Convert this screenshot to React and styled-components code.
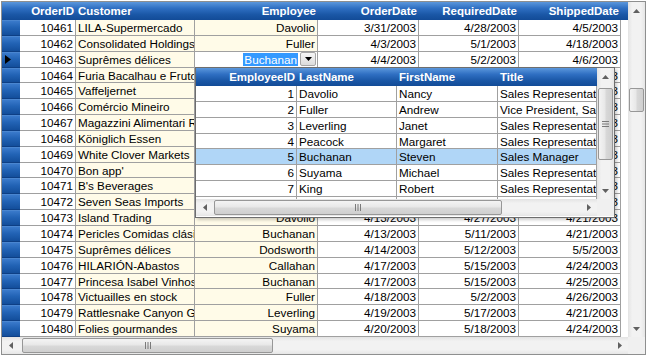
import React from "react";
import styled, { createGlobalStyle } from "styled-components";

const GlobalStyle = createGlobalStyle`
  html, body {
    margin: 0;
    padding: 0;
    background: #ffffff;
  }
  body {
    font-family: "Liberation Sans", Arial, sans-serif;
    font-size: 11.7px;
    color: #000000;
  }
  * {
    box-sizing: border-box;
  }
`;

const ROW_H = "15.85px";
const LINE = "#a0a0a0";
const HEADER_BG = "linear-gradient(to bottom, #5b97dc 0%, #2f6fc2 35%, #1a57a6 70%, #124b97 100%)";
const GRID_COLS = "18px 56px 119px 123px 101px 100px 102px 1fr";
const POPUP_COLS = "101px 100px 101px 99px";

const Frame = styled.div`
    margin: 1px 0 0 1px;
    width: 645px;
    height: 354px;
    border: 1px solid #8e8f8f;
    display: grid;
    grid-template-columns: 626px 17px;
    grid-template-rows: 335px 17px;
    background: #ffffff;
`;

const GridArea = styled.div`
    position: relative;
    overflow: hidden;
    background: #ffffff;
`;

const HeaderRow = styled.div`
    display: grid;
    grid-template-columns: ${(p) => p.$cols};
    height: 18px;
    background: ${HEADER_BG};
`;

const HeaderCell = styled.div`
    color: #ffffff;
    font-weight: bold;
    font-size: 11.5px;
    line-height: 18px;
    padding: 0 2px;
    text-align: ${(p) => p.$align || "left"};
    white-space: nowrap;
    overflow: hidden;
`;

const DataRow = styled.div`
    display: grid;
    grid-template-columns: ${(p) => p.$cols};
    height: ${ROW_H};
    background: ${(p) => p.$selected ? "#b0d6f7" : "transparent"};
`;

const RowHead = styled.div`
    background: linear-gradient(to bottom, #3a7acb 0%, #2263b5 45%, #134e9b 100%);
    border-top: 1px solid #4a86d0;
    border-bottom: 1px solid #0d3f85;
    display: flex;
    align-items: center;
    padding-left: 3px;
`;

const Cell = styled.div`
    border-right: 1px solid ${LINE};
    border-bottom: 1px solid ${LINE};
    background: ${(p) => p.$bg || "transparent"};
    text-align: ${(p) => p.$align || "left"};
    padding: 0 2px;
    line-height: 15px;
    white-space: nowrap;
    overflow: hidden;
`;

const Filler = styled.div`
    background: #ffffff;
`;

const EditCell = styled.div`
    border-right: 1px solid ${LINE};
    border-bottom: 1px solid ${LINE};
    background: #ffffff;
    display: flex;
    align-items: center;
    justify-content: flex-end;
    padding-right: 1px;
`;

const Selected = styled.span`
    background: #3399ff;
    color: #ffffff;
    line-height: 13px;
    padding: 0 1px;
`;

const DropButton = styled.div`
    width: 16px;
    height: 14px;
    margin-left: 2px;
    border: 1px solid #a7a7a7;
    border-radius: 2px;
    background: linear-gradient(to bottom, #f6f6f6, #dcdcdc);
    display: flex;
    align-items: center;
    justify-content: center;
`;

const Popup = styled.div`
    position: absolute;
    left: 193px;
    top: 65px;
    width: 420px;
    height: 151px;
    border: 1px solid #6e6e6e;
    box-shadow: 2px 2px 3px rgba(0, 0, 0, 0.2);
    background: #ffffff;
    display: grid;
    grid-template-columns: 401px 17px;
    grid-template-rows: 131px 17px;
`;

const PopupBody = styled.div`
    overflow: hidden;
`;

const VScroll = styled.div`
    display: flex;
    flex-direction: column;
    background: linear-gradient(to right, #e3e3e3 0%, #f2f2f2 25%, #f2f2f2 75%, #e6e6e6 100%);
`;

const HScroll = styled.div`
    display: flex;
    background: linear-gradient(to bottom, #e3e3e3 0%, #f2f2f2 25%, #f2f2f2 75%, #e6e6e6 100%);
`;

const ArrowBox = styled.div`
    width: 17px;
    height: 17px;
    flex: none;
    display: flex;
    align-items: center;
    justify-content: center;
`;

const Track = styled.div`
    flex: 1;
    display: flex;
    flex-direction: ${(p) => (p.$vertical ? "column" : "row")};
    min-width: 0;
    min-height: 0;
`;

const Thumb = styled.div`
    flex: none;
    border: 1px solid #979797;
    border-radius: 2px;
    display: flex;
    align-items: center;
    justify-content: center;
    ${(p) =>
        p.$vertical
            ? `margin: ${p.$offset}px 1px 0 1px;
               height: ${p.$size}px;
               background: linear-gradient(to right, #f4f4f4, #e8e8e8 45%, #d8d8d8 55%, #cfcfcf);`
            : `margin: 1px 0 1px ${p.$offset}px;
               width: ${p.$size}px;
               background: linear-gradient(to bottom, #f4f4f4, #e8e8e8 45%, #d8d8d8 55%, #cfcfcf);`}
`;

const Corner = styled.div`
    background: #f0f0f0;
`;

function Arrow({ dir, color = "#606060" }) {
    const pts = {
        up: "0,4 3.5,0 7,4",
        down: "0,0 7,0 3.5,4",
        left: "4,0 4,7 0,3.5",
        right: "0,0 0,7 4,3.5",
    }[dir];
    const vertical = dir === "up" || dir === "down";
    return (
        <svg width={vertical ? 7 : 4} height={vertical ? 4 : 7} viewBox={vertical ? "0 0 7 4" : "0 0 4 7"}>
            <polygon points={pts} fill={color} />
        </svg>
    );
}

function Grip({ vertical }) {
    return vertical ? (
        <svg width="7" height="6" viewBox="0 0 7 6">
            <rect x="0" y="0" width="7" height="1" fill="#7a7a7a" />
            <rect x="0" y="2.5" width="7" height="1" fill="#7a7a7a" />
            <rect x="0" y="5" width="7" height="1" fill="#7a7a7a" />
        </svg>
    ) : (
        <svg width="6" height="7" viewBox="0 0 6 7">
            <rect x="0" y="0" width="1" height="7" fill="#7a7a7a" />
            <rect x="2.5" y="0" width="1" height="7" fill="#7a7a7a" />
            <rect x="5" y="0" width="1" height="7" fill="#7a7a7a" />
        </svg>
    );
}

function VerticalBar({ offset, size, grip }) {
    return (
        <VScroll>
            <ArrowBox><Arrow dir="up" /></ArrowBox>
            <Track $vertical>
                <Thumb $vertical $offset={offset} $size={size}>{grip && <Grip vertical />}</Thumb>
            </Track>
            <ArrowBox><Arrow dir="down" /></ArrowBox>
        </VScroll>
    );
}

function HorizontalBar({ offset, size }) {
    return (
        <HScroll>
            <ArrowBox><Arrow dir="left" /></ArrowBox>
            <Track>
                <Thumb $offset={offset} $size={size}><Grip /></Thumb>
            </Track>
            <ArrowBox><Arrow dir="right" /></ArrowBox>
        </HScroll>
    );
}

const orders = [
    [10461, "LILA-Supermercado", "Davolio", "3/31/2003", "4/28/2003", "4/5/2003"],
    [10462, "Consolidated Holdings", "Fuller", "4/3/2003", "5/1/2003", "4/18/2003"],
    [10463, "Suprêmes délices", "Buchanan", "4/4/2003", "5/2/2003", "4/6/2003"],
    [10464, "Furia Bacalhau e Frutos do Mar", "Peacock", "4/4/2003", "5/2/2003", "4/14/2003"],
    [10465, "Vaffeljernet", "Peacock", "4/5/2003", "5/3/2003", "4/14/2003"],
    [10466, "Comércio Mineiro", "Peacock", "4/6/2003", "5/4/2003", "4/13/2003"],
    [10467, "Magazzini Alimentari Riuniti", "Peacock", "4/6/2003", "5/4/2003", "4/11/2003"],
    [10468, "Königlich Essen", "Leverling", "4/7/2003", "5/5/2003", "4/12/2003"],
    [10469, "White Clover Markets", "Davolio", "4/10/2003", "5/8/2003", "4/14/2003"],
    [10470, "Bon app'", "Peacock", "4/11/2003", "5/9/2003", "4/14/2003"],
    [10471, "B's Beverages", "Fuller", "4/11/2003", "5/9/2003", "4/18/2003"],
    [10472, "Seven Seas Imports", "King", "4/12/2003", "5/10/2003", "4/19/2003"],
    [10473, "Island Trading", "Davolio", "4/13/2003", "4/27/2003", "4/21/2003"],
    [10474, "Pericles Comidas clásicas", "Buchanan", "4/13/2003", "5/11/2003", "4/21/2003"],
    [10475, "Suprêmes délices", "Dodsworth", "4/14/2003", "5/12/2003", "5/5/2003"],
    [10476, "HILARIÓN-Abastos", "Callahan", "4/17/2003", "5/15/2003", "4/24/2003"],
    [10477, "Princesa Isabel Vinhos", "Buchanan", "4/17/2003", "5/15/2003", "4/25/2003"],
    [10478, "Victuailles en stock", "Fuller", "4/18/2003", "5/2/2003", "4/26/2003"],
    [10479, "Rattlesnake Canyon Grocery", "Leverling", "4/19/2003", "5/17/2003", "4/21/2003"],
    [10480, "Folies gourmandes", "Suyama", "4/20/2003", "5/18/2003", "4/24/2003"],
];

const employees = [
    [1, "Davolio", "Nancy", "Sales Representative"],
    [2, "Fuller", "Andrew", "Vice President, Sales"],
    [3, "Leverling", "Janet", "Sales Representative"],
    [4, "Peacock", "Margaret", "Sales Representative"],
    [5, "Buchanan", "Steven", "Sales Manager"],
    [6, "Suyama", "Michael", "Sales Representative"],
    [7, "King", "Robert", "Sales Representative"],
    [8, "Callahan", "Laura", "Inside Sales Coordinator"],
];

const CREAM = "#fffbe8";
const CURRENT = 10463;

function EmployeePopup() {
    return (
        <Popup>
            <PopupBody>
                <HeaderRow $cols={POPUP_COLS}>
                    <HeaderCell $align="right">EmployeeID</HeaderCell>
                    <HeaderCell>LastName</HeaderCell>
                    <HeaderCell>FirstName</HeaderCell>
                    <HeaderCell>Title</HeaderCell>
                </HeaderRow>
                {employees.map(([id, last, first, title]) => (
                    <DataRow key={id} $cols={POPUP_COLS} $selected={id === 5}>
                        <Cell $align="right">{id}</Cell>
                        <Cell>{last}</Cell>
                        <Cell>{first}</Cell>
                        <Cell>{title}</Cell>
                    </DataRow>
                ))}
            </PopupBody>
            <VerticalBar offset={3} size={72} grip />
            <HorizontalBar offset={1} size={288} />
            <Corner />
        </Popup>
    );
}

export default function App() {
    return (
        <>
            <GlobalStyle />
            <Frame>
                <GridArea>
                    <HeaderRow $cols={GRID_COLS}>
                        <div />
                        <HeaderCell $align="right">OrderID</HeaderCell>
                        <HeaderCell>Customer</HeaderCell>
                        <HeaderCell $align="right">Employee</HeaderCell>
                        <HeaderCell $align="right">OrderDate</HeaderCell>
                        <HeaderCell $align="right">RequiredDate</HeaderCell>
                        <HeaderCell $align="right">ShippedDate</HeaderCell>
                        <div />
                    </HeaderRow>
                    {orders.map(([id, customer, employee, ordered, required, shipped]) => (
                        <DataRow key={id} $cols={GRID_COLS}>
                            <RowHead>
                                {id === CURRENT && (
                                    <svg width="6" height="9" viewBox="0 0 6 9">
                                        <polygon points="0,0 6,4.5 0,9" fill="#000000" />
                                    </svg>
                                )}
                            </RowHead>
                            <Cell $align="right">{id}</Cell>
                            <Cell $bg={CREAM}>{customer}</Cell>
                            {id === CURRENT ? (
                                <EditCell>
                                    <Selected>{employee}</Selected>
                                    <DropButton><Arrow dir="down" color="#000000" /></DropButton>
                                </EditCell>
                            ) : (
                                <Cell $bg={CREAM} $align="right">{employee}</Cell>
                            )}
                            <Cell $align="right">{ordered}</Cell>
                            <Cell $align="right">{required}</Cell>
                            <Cell $align="right">{shipped}</Cell>
                            <Filler />
                        </DataRow>
                    ))}
                    <EmployeePopup />
                </GridArea>
                <VerticalBar offset={69} size={24} />
                <HorizontalBar offset={3} size={251} />
                <Corner />
            </Frame>
        </>
    );
}
